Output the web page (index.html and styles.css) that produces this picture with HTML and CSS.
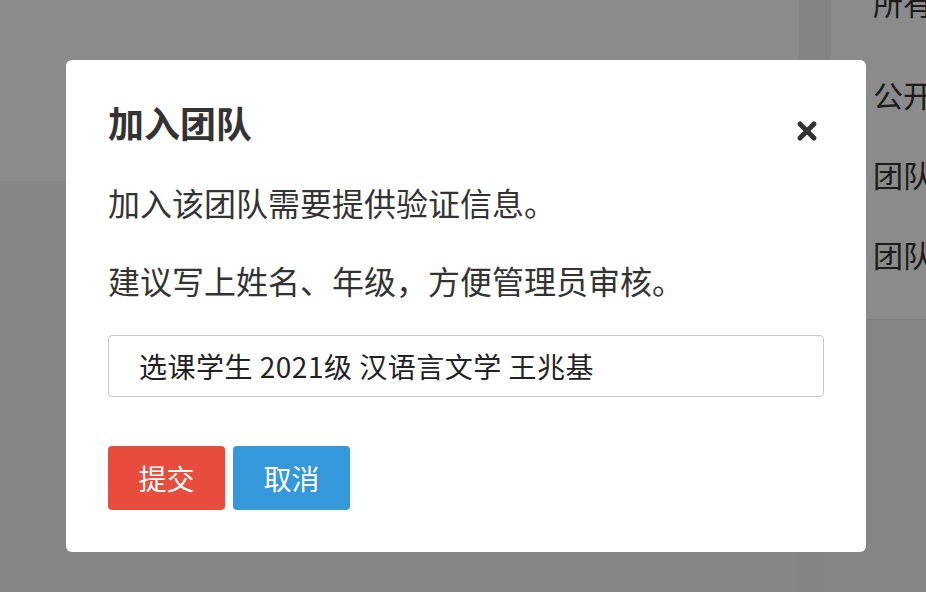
FILE: index.html
```html
<!DOCTYPE html>
<html lang="zh-CN">
<head>
    <meta charset="utf-8">
    <title>加入团队</title>
    <link rel="stylesheet" href="styles.css">
</head>
<body>
    <div class="page">
        <div class="main">
            <div class="hero"></div>
            <div class="content"></div>
        </div>
        <div class="gutter"></div>
        <div class="side">
            <div class="side-panel">
                <div class="side-head">所有团队</div>
                <ul class="side-list">
                    <li>公开团队</li>
                    <li>团队成员</li>
                    <li>团队管理</li>
                </ul>
            </div>
        </div>
    </div>

    <div class="mask">
        <div class="dialog">
            <div class="dialog-head">
                <h2 class="dialog-title">加入团队</h2>
                <span class="dialog-close">
                    <svg width="22" height="22" viewBox="0 0 22 22">
                        <path d="M4 4 L18 18 M18 4 L4 18" stroke="#333" stroke-width="5" stroke-linecap="round" fill="none"/>
                    </svg>
                </span>
            </div>
            <p class="dialog-text">加入该团队需要提供验证信息。</p>
            <p class="dialog-text">建议写上姓名、年级，方便管理员审核。</p>
            <input class="dialog-input" type="text" value="选课学生 2021级 汉语言文学 王兆基">
            <div class="dialog-btns">
                <button class="btn btn-red">提交</button>
                <button class="btn btn-blue">取消</button>
            </div>
        </div>
    </div>
</body>
</html>
```

FILE: styles.css
```css
*
{
    box-sizing: border-box;
}
html, body
{
    margin: 0;
    height: 100%;
    overflow: hidden;
}
body
{
    font-family: "PingFang SC", "Noto Sans CJK SC", "Noto Sans", sans-serif;
    color: #333;
    background-color: #f2f2f2;
}
.page
{
    display: flex;
    height: 100%;
}
.main
{
    width: 799px;
    display: flex;
    flex-direction: column;
}
.hero
{
    height: 181px;
    background-color: #fdfdfd;
}
.content
{
    flex: 1;
    background-color: #f4f4f4;
}
.gutter
{
    width: 32px;
    background-color: #eeeeee;
}
.side
{
    flex: 1;
    overflow: hidden;
}
.side-panel
{
    background-color: #fdfdfd;
    border-bottom: 1px solid #e6e6e6;
    padding: 0 0 25px 42px;
    white-space: nowrap;
    font-size: 30px;
}
.side-head
{
    line-height: 40px;
    margin-top: -18px;
}
.side-list
{
    list-style: none;
    margin: 0;
    padding: 32px 0 0 0;
}
.side-list li
{
    line-height: 80px;
}
.mask
{
    position: fixed;
    left: 0;
    top: 0;
    right: 0;
    bottom: 0;
    background-color: rgba(0, 0, 0, 0.45);
}
.dialog
{
    width: 800px;
    margin: 60px 0 0 66px;
    padding: 38px 42px 42px 42px;
    background-color: #fff;
    border-radius: 6px;
}
.dialog-head
{
    display: flex;
    justify-content: space-between;
    align-items: center;
    height: 48px;
}
.dialog-title
{
    margin: 0;
    font-size: 36px;
    font-weight: bold;
    line-height: 48px;
}
.dialog-close
{
    display: flex;
    margin: 18px 6px 0 0;
    cursor: pointer;
}
.dialog-text
{
    margin: 32px 0 0 0;
    font-size: 32px;
    line-height: 48px;
}
.dialog-text + .dialog-text
{
    margin-top: 30px;
}
.dialog-input
{
    display: block;
    width: 100%;
    height: 62px;
    margin-top: 31px;
    padding: 0 0 0 30px;
    border: 1px solid #c8c8c8;
    border-radius: 4px;
    font-family: inherit;
    font-size: 28px;
    letter-spacing: 0.5px;
    color: #222;
}
.dialog-input:focus
{
    outline: none;
}
.dialog-btns
{
    display: flex;
    gap: 8px;
    margin-top: 49px;
}
.btn
{
    width: 117px;
    height: 64px;
    border: none;
    border-radius: 4px;
    font-family: inherit;
    font-size: 28px;
    color: #fff;
    cursor: pointer;
}
.btn-red
{
    background-color: #e74c3c;
}
.btn-blue
{
    background-color: #3498db;
}
```
